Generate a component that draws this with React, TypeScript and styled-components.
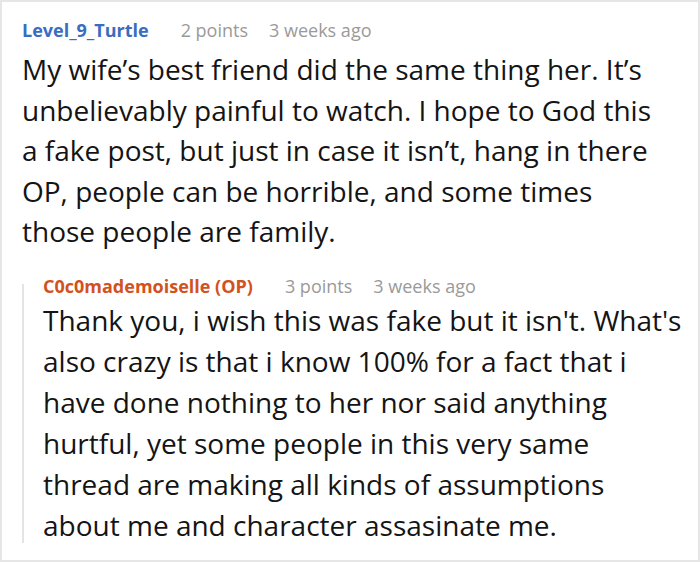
import React from "react";
import styled, { createGlobalStyle } from "styled-components";

const GlobalStyle = createGlobalStyle`
  html, body {
    margin: 0;
    padding: 0;
    background: #ffffff;
  }
  body {
    font-family: "Open Sans", "Noto Sans", sans-serif;
  }
`;

const Frame = styled.div`
  box-sizing: border-box;
  width: 700px;
  height: 562px;
  border: 2px solid #e6e6e6;
  padding: 14px 0 0 20px;
  overflow: hidden;
`;

const Comment = styled.div`
  display: flex;
  flex-direction: column;
`;

const Meta = styled.div<{ $nested?: boolean }>`
  display: flex;
  align-items: baseline;
  gap: 21px;
  font-size: 18px;
  line-height: 28px;
  margin-top: ${(p) => (p.$nested ? "-12px" : "0")};
`;

const Author = styled.span<{ $op?: boolean }>`
  font-weight: 700;
  color: ${(p) => (p.$op ? "#d2521d" : "#3a6dbf")};
  margin-right: 11px;
`;

const Info = styled.span`
  color: #9a9a9a;
`;

const Body = styled.p<{ $nested?: boolean }>`
  margin: ${(p) => (p.$nested ? "0 0 -3px" : "5px 0 0")};
  font-size: 28px;
  line-height: ${(p) => (p.$nested ? "41px" : "40.5px")};
  color: #141414;
  white-space: nowrap;
`;

const Replies = styled.div`
  margin-top: 32px;
  border-left: 2px solid #e4e4e4;
  padding-left: 19px;
`;

type CommentData = {
  author: string;
  op?: boolean;
  points: string;
  time: string;
  lines: string[];
};

const parent: CommentData = {
  author: "Level_9_Turtle",
  points: "2 points",
  time: "3 weeks ago",
  lines: [
    "My wife’s best friend did the same thing her. It’s",
    "unbelievably painful to watch. I hope to God this",
    "a fake post, but just in case it isn’t, hang in there",
    "OP, people can be horrible, and some times",
    "those people are family.",
  ],
};

const reply: CommentData = {
  author: "C0c0mademoiselle (OP)",
  op: true,
  points: "3 points",
  time: "3 weeks ago",
  lines: [
    "Thank you, i wish this was fake but it isn't. What's",
    "also crazy is that i know 100% for a fact that i",
    "have done nothing to her nor said anything",
    "hurtful, yet some people in this very same",
    "thread are making all kinds of assumptions",
    "about me and character assasinate me.",
  ],
};

const CommentView: React.FC<{ c: CommentData; nested?: boolean }> = ({ c, nested }) => (
  <Comment>
    <Meta $nested={nested}>
      <Author $op={c.op}>{c.author}</Author>
      <Info>{c.points}</Info>
      <Info>{c.time}</Info>
    </Meta>
    <Body $nested={nested}>
      {c.lines.map((line, i) => (
        <React.Fragment key={i}>
          {line}
          {i < c.lines.length - 1 && <br />}
        </React.Fragment>
      ))}
    </Body>
  </Comment>
);

const App: React.FC = () => {
  return (
    <>
      <GlobalStyle />
      <Frame>
        <CommentView c={parent} />
        <Replies>
          <CommentView c={reply} nested />
        </Replies>
      </Frame>
    </>
  );
};

export default App;
